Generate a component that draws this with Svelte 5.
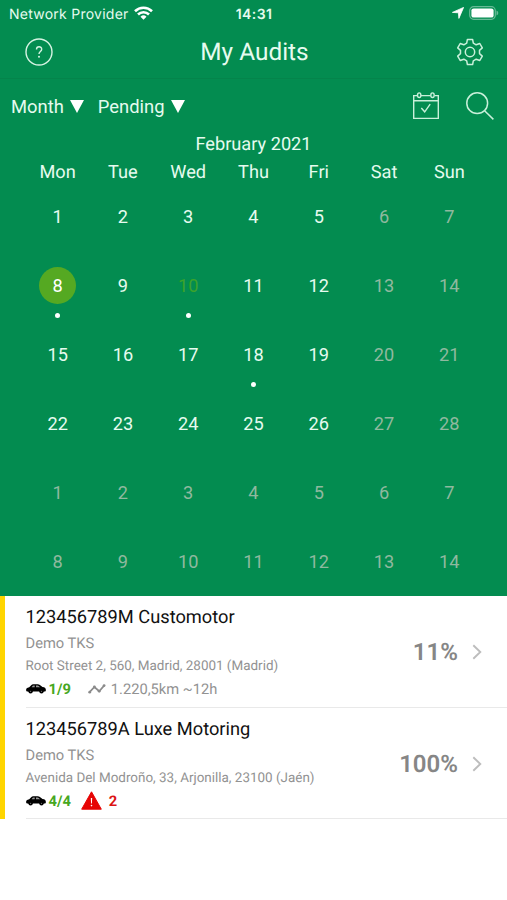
<script>
	const weekdays = ['Mon', 'Tue', 'Wed', 'Thu', 'Fri', 'Sat', 'Sun']

	// six weeks, february 2021 starts on a monday
	const weeks = []
	for (let w = 0; w < 6; w++) {
		const week = []
		for (let d = 0; d < 7; d++) {
			const n = w * 7 + d + 1
			week.push({
				day: n > 28 ? n - 28 : n,
				key: n,
				muted: n > 28 || d > 4,
				today: n === 10,
				dot: n === 8 || n === 10 || n === 18
			})
		}
		weeks.push(week)
	}

	let selected = $state(8)

	const audits = [
		{
			name: '123456789M Customotor',
			company: 'Demo TKS',
			address: 'Root Street 2, 560, Madrid, 28001 (Madrid)',
			cars: '1/9',
			route: '1.220,5km ~12h',
			progress: '11%'
		},
		{
			name: '123456789A Luxe Motoring',
			company: 'Demo TKS',
			address: 'Avenida Del Modroño, 33, Arjonilla, 23100 (Jaén)',
			cars: '4/4',
			warnings: 2,
			progress: '100%'
		}
	]
</script>

<main>
	<section class="top">
		<div class="status">
			<div class="carrier">
				<span>Network Provider</span>
				<svg width="19" height="14" viewBox="0 0 19 14">
					<g fill="none" stroke="#fff" stroke-width="2.6">
						<path d="M1 5.2a12.2 12.2 0 0 1 17 0" />
						<path d="M4 8.5a7.8 7.8 0 0 1 11 0" />
					</g>
					<path d="M9.5 13.7 6.5 10.7a4.3 4.3 0 0 1 6 0z" fill="#fff" />
				</svg>
			</div>
			<div class="clock">14:31</div>
			<div class="power">
				<svg width="12" height="12" viewBox="0 0 12 12">
					<path d="M11.6.4 6.9 11.4 6.4 5.8.4 5.4z" fill="#fff" stroke="#fff" stroke-width=".8" stroke-linejoin="round" />
				</svg>
				<svg width="30" height="14" viewBox="0 0 30 14">
					<rect x=".7" y=".7" width="25.6" height="12.6" rx="4" fill="none" stroke="#fff" stroke-opacity=".4" stroke-width="1.2" />
					<rect x="2.4" y="2.4" width="22.2" height="9.2" rx="2.2" fill="#fff" />
					<path d="M27.5 4.6q1.8.6 1.8 2.4t-1.8 2.4z" fill="#fff" fill-opacity=".4" />
				</svg>
			</div>
		</div>

		<header>
			<button aria-label="Help">
				<svg width="28" height="28" viewBox="0 0 28 28">
					<circle cx="14" cy="14" r="13" fill="none" stroke="#d5f3e2" stroke-width="1.4" />
					<path d="M11.5 11.4c0-3.5 5.2-3.4 5.2-.2 0 2.2-2.7 2.4-2.7 4.8" fill="none" stroke="#d5f3e2" stroke-width="1.4" />
					<circle cx="14" cy="18.7" r="1" fill="#d5f3e2" />
				</svg>
			</button>
			<h1>My Audits</h1>
			<button aria-label="Settings">
				<svg width="28" height="28" viewBox="0 0 28 28" fill="none" stroke="#c9f0da" stroke-width="1.5" stroke-linejoin="round">
					<path d="M11.4 1.4h5.2l.7 3.7 2.9 1.7 3.6-1.3 2.5 4.4-2.8 2.5v3.2l2.8 2.5-2.5 4.4-3.6-1.3-2.9 1.7-.7 3.7h-5.2l-.7-3.7-2.9-1.7-3.6 1.3-2.5-4.4 2.8-2.5v-3.2L1.7 9.9l2.5-4.4 3.6 1.3 2.9-1.7z" />
					<circle cx="14" cy="14" r="4.7" />
				</svg>
			</button>
		</header>

		<div class="toolbar">
			<button class="filter">Month <i></i></button>
			<button class="filter">Pending <i></i></button>
			<div class="tools">
				<button aria-label="Go to today">
					<svg width="28" height="28" viewBox="0 0 28 28" fill="none" stroke="#c9f0da" stroke-width="1.4">
						<path d="M5.4 3.6H1.7v22.8h24.6V3.6h-3.7M9 3.6h9.6M1.7 8.7h24.6" />
						<ellipse cx="7.2" cy="3.2" rx="1.7" ry="2.3" />
						<ellipse cx="20.5" cy="3.2" rx="1.7" ry="2.3" />
						<path d="m9.3 16 3.4 3.8 5.5-7.6" />
					</svg>
				</button>
				<button aria-label="Search">
					<svg width="28" height="28" viewBox="0 0 28 28" fill="none" stroke="#c9f0da" stroke-width="1.5">
						<circle cx="11.2" cy="11.2" r="10.4" />
						<path d="m18.6 18.8 8.8 8.6" />
					</svg>
				</button>
			</div>
		</div>

		<div class="month">February 2021</div>
		<div class="grid names">
			{#each weekdays as name}
				<span>{name}</span>
			{/each}
		</div>
		{#each weeks as week}
			<div class="grid week">
				{#each week as d (d.key)}
					<button
						class="day"
						class:muted={d.muted}
						class:today={d.today}
						class:selected={d.key === selected}
						onclick={() => (selected = d.key)}
					>
						<span class="num">{d.day}</span>
						{#if d.dot}<span class="dot"></span>{/if}
					</button>
				{/each}
			</div>
		{/each}
	</section>

	<section class="list">
		{#each audits as audit}
			<article>
				<div class="info">
					<h2>{audit.name}</h2>
					<p class="company">{audit.company}</p>
					<p class="address">{audit.address}</p>
					<div class="meta">
						<svg class="car" width="20" height="10" viewBox="0 0 20 10">
							<path d="M.1 6.6C0 4.5.8 3.7 3.2 3.3L5.2 1.2Q5.9.4 7.3.3h4.4q1.3 0 2.2.7l2.6 2.1c2.5.3 3.5 1.1 3.4 3.5l-.6 1H.8z" />
							<circle cx="4.6" cy="7.3" r="2.2" />
							<circle cx="15.5" cy="7.3" r="2.2" />
							<path d="M5.6 3.2 6.8 1.8q.3-.3.8-.3h1.1v1.7zM10 1.5h1.6q.6 0 1.1.4l1.4 1.3H10z" fill="#999" />
							<circle cx="4.6" cy="7.3" r=".6" fill="#777" />
							<circle cx="15.5" cy="7.3" r=".6" fill="#777" />
						</svg>
						<b class="cars">{audit.cars}</b>
						{#if audit.route}
							<svg class="trend" width="18" height="10" viewBox="0 0 18 10">
								<path d="M1.6 8.2 6.4 3l4.8 4.2 4.9-5.6" fill="none" stroke="#8b8b8b" stroke-width="1.7" />
								<g fill="#8b8b8b">
									<circle cx="1.7" cy="8.2" r="1.4" />
									<circle cx="6.4" cy="3" r="1.4" />
									<circle cx="11.2" cy="7.2" r="1.4" />
									<circle cx="16.1" cy="1.6" r="1.4" />
								</g>
							</svg>
							<span class="route">{audit.route}</span>
						{/if}
						{#if audit.warnings}
							<svg class="warn" width="21" height="19" viewBox="0 0 21 19">
								<path d="M10.5.8 20.3 18.2H.7z" fill="#e60505" stroke="#e60505" stroke-linejoin="round" />
								<path d="M9.8 7h1.4l-.3 5.4h-.8z" fill="#fff" />
								<circle cx="10.5" cy="14.6" r=".8" fill="#fff" />
							</svg>
							<b class="warnings">{audit.warnings}</b>
						{/if}
					</div>
				</div>
				<div class="progress">{audit.progress}</div>
				<svg class="chevron" width="10" height="16" viewBox="0 0 10 16">
					<path d="m1.3 1.2 7 6.8-7 6.8" fill="none" stroke="#bdbdbd" stroke-width="1.9" />
				</svg>
			</article>
		{/each}
	</section>
</main>

<style>
	:global(body) {
		margin: 0;
		background: #fff;
	}
	main {
		width: 507px;
		height: 900px;
		overflow: hidden;
		font-family: Roboto, sans-serif;
		text-rendering: geometricPrecision;
		background: #fff;
	}
	svg {
		display: block;
		flex: none;
	}
	button {
		padding: 0;
		border: 0;
		background: none;
		font: inherit;
		color: inherit;
	}
	.top {
		height: 596px;
		background: #038c50;
		color: #e6fbef;
	}

	.status {
		display: grid;
		grid-template-columns: 1fr auto 1fr;
		align-items: center;
		height: 27px;
		padding: 1px 8px 0 9px;
		box-sizing: border-box;
	}
	.carrier {
		display: flex;
		align-items: center;
		gap: 5px;
		font-family: Inter, sans-serif;
		font-size: 14px;
		letter-spacing: 0.25px;
		white-space: nowrap;
	}
	.carrier svg {
		margin-top: -2px;
	}
	.clock {
		font-family: Inter, sans-serif;
		font-size: 14px;
		font-weight: 600;
		letter-spacing: 0.4px;
	}
	.power {
		display: flex;
		align-items: center;
		justify-content: flex-end;
		gap: 5px;
		margin-top: -2px;
	}

	header {
		display: flex;
		align-items: center;
		justify-content: space-between;
		height: 49px;
		padding: 0 23px 2px 25px;
		border-bottom: 1px solid #04844b;
	}
	h1 {
		margin: 0;
		font-size: 24.4px;
		line-height: 30px;
		font-weight: 400;
	}

	.toolbar {
		display: flex;
		align-items: center;
		gap: 14px;
		height: 54px;
		padding: 0 13px 0 11px;
	}
	.filter {
		display: flex;
		align-items: center;
		gap: 6px;
		font-size: 18.4px;
	}
	.filter i {
		border: 7.5px solid transparent;
		border-top: 13px solid #fff;
		border-bottom: 0;
	}
	.tools {
		display: flex;
		gap: 26px;
		margin-left: auto;
	}

	.month {
		height: 24px;
		line-height: 24px;
		font-size: 18.2px;
		text-align: center;
	}
	.grid {
		display: grid;
		grid-template-columns: repeat(7, 1fr);
		padding: 0 25px;
		font-size: 18.2px;
		text-align: center;
	}
	.names {
		height: 40px;
		padding-top: 1px;
		line-height: 30px;
	}
	.week {
		height: 69px;
	}
	.day {
		display: flex;
		flex-direction: column;
		align-items: center;
	}
	.num {
		width: 37px;
		height: 36px;
		padding-top: 1px;
		line-height: 36px;
		border-radius: 50%;
	}
	.muted {
		color: #8fb99f;
	}
	.today {
		color: #3ca32b;
	}
	.selected .num {
		background: #55a922;
		color: #fff;
	}
	.dot {
		width: 5px;
		height: 5px;
		margin-top: 9px;
		border-radius: 50%;
		background: #fff;
	}

	article {
		display: flex;
		align-items: center;
		height: 111.5px;
		border-left: 5px solid #ffd500;
		box-sizing: border-box;
		padding: 1px 25px 0 20.5px;
		background: linear-gradient(#e9e9e9, #e9e9e9) 21px 100% / 100% 1px no-repeat;
	}
	.info {
		flex: 1;
	}
	h2 {
		margin: 0;
		padding-top: 1px;
		line-height: 26px;
		font-size: 18.25px;
		font-weight: 400;
		color: #111;
	}
	p {
		margin: 0;
		color: #929292;
	}
	.company {
		line-height: 24px;
		font-size: 14.7px;
	}
	.address {
		padding-top: 1px;
		line-height: 22px;
		font-size: 13.45px;
	}
	.meta {
		display: flex;
		align-items: center;
		height: 22px;
		font-size: 14.7px;
		color: #929292;
	}
	.cars {
		margin-left: 3px;
		color: #46a721;
	}
	.trend {
		margin-left: 17px;
	}
	.route {
		margin-left: 5px;
	}
	.warn {
		margin-left: 10px;
	}
	.warnings {
		margin-left: 7px;
		color: #dc1414;
	}
	.progress {
		font-size: 24px;
		font-weight: 600;
		color: #868686;
	}
	.chevron {
		margin-left: 14px;
	}
</style>
